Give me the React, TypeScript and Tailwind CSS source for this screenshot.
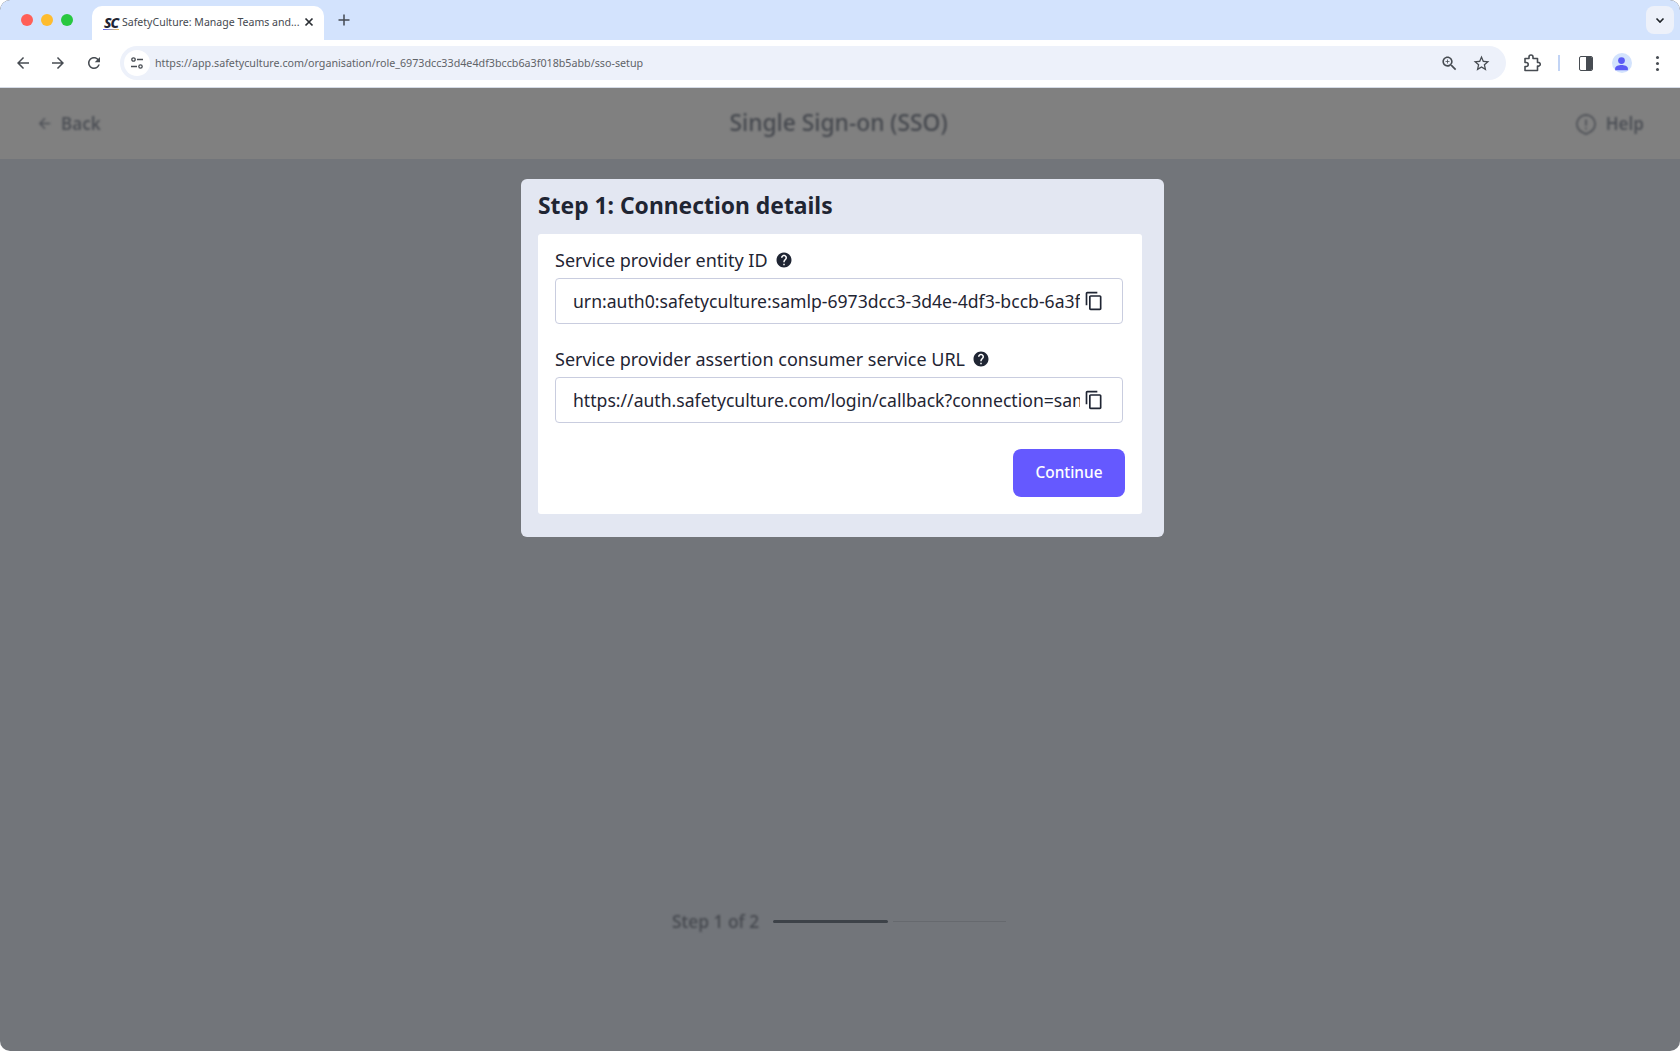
import React from 'react';

const font = "font-['Noto_Sans',sans-serif]";

const MatIcon: React.FC<{ d: string; className?: string }> = ({ d, className }) => (
    <svg viewBox="0 0 24 24" fill="currentColor" className={className}>
        <path d={d} />
    </svg>
);

const paths = {
    back: 'M20 11H7.83l5.59-5.59L12 4l-8 8 8 8 1.41-1.41L7.83 13H20v-2z',
    forward: 'M12 4l-1.41 1.41L16.17 11H4v2h12.17l-5.58 5.59L12 20l8-8z',
    refresh: 'M17.65 6.35C16.2 4.9 14.21 4 12 4c-4.42 0-7.99 3.58-7.99 8s3.57 8 7.99 8c3.73 0 6.84-2.55 7.73-6h-2.08c-.82 2.33-3.04 4-5.65 4-3.31 0-6-2.69-6-6s2.69-6 6-6c1.66 0 3.14.69 4.22 1.78L13 11h7V4l-2.35 2.35z',
    zoom: 'M15.5 14h-.79l-.28-.27C15.41 12.59 16 11.11 16 9.5 16 5.91 13.09 3 9.5 3S3 5.91 3 9.5 5.91 16 9.5 16c1.61 0 3.09-.59 4.23-1.57l.27.28v.79l5 4.99L20.49 19l-4.99-5zm-6 0C7.01 14 5 11.99 5 9.5S7.01 5 9.5 5 14 7.01 14 9.5 11.99 14 9.5 14zM12 10h-2v2H9v-2H7V9h2V7h1v2h2v1z',
    star: 'M22 9.24l-7.19-.62L12 2 9.19 8.63 2 9.24l5.46 4.73L5.82 21 12 17.27 18.18 21l-1.63-7.03L22 9.24zM12 15.4l-3.76 2.27 1-4.28-3.32-2.88 4.38-.38L12 6.1l1.71 4.04 4.38.38-3.32 2.88 1 4.28L12 15.4z',
    copy: 'M16 1H4c-1.1 0-2 .9-2 2v14h2V3h12V1zm3 4H8c-1.1 0-2 .9-2 2v14c0 1.1.9 2 2 2h11c1.1 0 2-.9 2-2V7c0-1.1-.9-2-2-2zm0 16H8V7h11v14z',
    help: 'M12 2C6.48 2 2 6.48 2 12s4.48 10 10 10 10-4.48 10-10S17.52 2 12 2zm1 17h-2v-2h2v2zm2.07-7.75l-.9.92C13.45 12.9 13 13.5 13 15h-2v-.5c0-1.1.45-2.1 1.17-2.83l1.24-1.26c.37-.36.59-.86.59-1.41 0-1.1-.9-2-2-2s-2 .9-2 2H8c0-2.21 1.79-4 4-4s4 1.79 4 4c0 .88-.36 1.68-.93 2.25z',
};

const TabBar = () => (
    <div className="flex h-10 items-end bg-[#d3e3fd] rounded-t-[10px]">
        <div className="flex h-10 w-[92px] items-center gap-[8px] pl-[21px] pb-[1px]">
            <span className="h-3 w-3 rounded-full bg-[#ff5f57]" />
            <span className="h-3 w-3 rounded-full bg-[#febc2e]" />
            <span className="h-3 w-3 rounded-full bg-[#28c840]" />
        </div>
        <div className="flex h-[34px] w-[232px] items-center rounded-t-[10px] bg-white pl-[9px] pr-[10px]">
            <div className="flex w-[20px] flex-col items-center">
                <span className="text-[14px] font-extrabold italic leading-[12px] tracking-[-1px] text-[#1f2533]">SC</span>
                <span className="h-[1px] w-[16px] bg-gradient-to-r from-[#5b5bf5] to-[#f5c242]" />
            </div>
            <span className="ml-[1px] whitespace-nowrap text-[10.55px] text-[#45494f]">SafetyCulture: Manage Teams and...</span>
            <svg viewBox="0 0 10 10" className="ml-auto mb-[3px] h-[10px] w-[10px] text-[#2a2e33]" stroke="currentColor" strokeWidth="1.7" fill="none">
                <path d="M1.5 1.5l7 7M8.5 1.5l-7 7" />
            </svg>
        </div>
        <div className="flex h-10 w-[40px] items-center justify-center pb-[1px]">
            <svg viewBox="0 0 12 12" className="h-3 w-3 text-[#444a52]" stroke="currentColor" strokeWidth="1.5" fill="none">
                <path d="M6 0.5v11M0.5 6h11" />
            </svg>
        </div>
        <div className="ml-auto flex h-10 items-center pr-[6px]">
            <div className="flex h-7 w-7 items-center justify-center rounded-[8px] bg-[#edf1fa]">
                <svg viewBox="0 0 12 12" className="h-3 w-3 text-[#1f2328]" stroke="currentColor" strokeWidth="1.6" fill="none">
                    <path d="M2.5 4.5L6 8l3.5-3.5" />
                </svg>
            </div>
        </div>
    </div>
);

const Toolbar = () => (
    <div className="flex h-[48px] items-center border-b border-[#d5dbe6] bg-white pb-[1px]">
        <div className="flex w-[120px] items-center pl-[14px] text-[#474c52]">
            <MatIcon d={paths.back} className="h-[18px] w-[18px]" />
            <MatIcon d={paths.forward} className="ml-[17px] h-[18px] w-[18px]" />
            <MatIcon d={paths.refresh} className="ml-[18px] h-[18px] w-[18px]" />
        </div>
        <div className="flex h-[34px] w-[1386px] items-center rounded-full bg-[#edf1fa] pl-[4px] pr-[15px]">
            <div className="flex h-[26px] w-[26px] items-center justify-center rounded-full bg-white">
                <svg viewBox="0 0 14 14" className="h-[14px] w-[14px] text-[#474c52]" stroke="currentColor" strokeWidth="1.3" fill="none">
                    <circle cx="3.5" cy="3.500" r="1.7" />
                    <path d="M7 3.5h6M1 10.5h6" />
                    <circle cx="10.5" cy="10.5" r="1.7" />
                </svg>
            </div>
            <span className="ml-[5px] whitespace-nowrap text-[10.72px] text-[#5f6368]">https://app.safetyculture.com/organisation/role_6973dcc33d4e4df3bccb6a3f018b5abb/sso-setup</span>
            <MatIcon d={paths.zoom} className="ml-auto h-[19px] w-[19px] text-[#474c52]" />
            <MatIcon d={paths.star} className="ml-[13px] h-[19px] w-[19px] text-[#474c52]" />
        </div>
        <svg viewBox="0 0 20 20" className="ml-[16px] h-[20px] w-[20px] text-[#474c52]" stroke="currentColor" strokeWidth="1.6" fill="none">
            <path d="M3 5.5h4V4a2 2 0 0 1 4 0v1.5h4.5v4H17a1.9 1.9 0 0 1 0 3.6h-1.5v4.4H3v-4h1.2a2 2 0 0 0 0-4H3z" strokeLinejoin="round" />
        </svg>
        <span className="ml-[16px] h-[16px] w-[1.5px] bg-[#c2d4f5]" />
        <div className="ml-[19px] flex h-[15px] w-[14px] overflow-hidden rounded-[2px] border-[1.5px] border-[#474c52]">
            <span className="w-1/2" />
            <span className="w-1/2 bg-[#474c52]" />
        </div>
        <div className="ml-[19px] flex h-5 w-5 items-center justify-center rounded-full bg-[#d3e3fd]">
            <svg viewBox="0 0 20 20" className="h-[15px] w-[15px] text-[#5b5bf5]" fill="currentColor">
                <circle cx="10" cy="6" r="4.5" />
                <path d="M1.5 19v-2.5c0-3 5-4.5 8.5-4.5s8.5 1.500 8.500 4.500V19z" />
            </svg>
        </div>
        <div className="ml-[24px] flex flex-col gap-[3px]">
            <span className="h-[3px] w-[3px] rounded-full bg-[#474c52]" />
            <span className="h-[3px] w-[3px] rounded-full bg-[#474c52]" />
            <span className="h-[3px] w-[3px] rounded-full bg-[#474c52]" />
        </div>
    </div>
);

const PageHeader = () => (
    <div className="flex h-[71px] items-center justify-between bg-[#808080] pl-[36px] pr-[36px] text-[#4d5056]">
        <div className="flex w-[200px] items-center gap-[8px] blur-[1px]">
            <MatIcon d={paths.back} className="h-[17px] w-[17px]" />
            <span className="text-[17px] font-semibold">Back</span>
        </div>
        <h1 className="mr-[3px] text-[22.8px] font-medium blur-[1px] text-[#45484e]">Single Sign-on (SSO)</h1>
        <div className="flex w-[200px] items-center justify-end gap-[9px] blur-[1px]">
            <svg viewBox="0 0 24 24" className="h-[22px] w-[22px]" stroke="currentColor" strokeWidth="1.800" fill="none">
                <path d="M12 2a10 10 0 0 1 3 19.500L12 23l-3-1.500A10 10 0 0 1 12 2zM12 7v7M12 16v2" />
            </svg>
            <span className="text-[17px] font-semibold">Help</span>
        </div>
    </div>
);

const CopyField: React.FC<{ label: string; value: string; className?: string }> = ({ label, value, className }) => (
    <div className={className}>
        <div className="flex h-[24px] items-center gap-[7px] text-[18px] leading-6 text-[#1f2533]">
            <span>{label}</span>
            <MatIcon d={paths.help} className="h-[18px] w-[18px]" />
        </div>
        <div className="mt-[6px] flex h-[46px] w-[568px] items-center rounded-[4px] border border-[#c9cddf] bg-white pl-[17px] pr-[18px]">
            <div className="min-w-0 flex-1 overflow-hidden whitespace-nowrap text-[17.6px] text-[#1f2533]">{value}</div>
            <MatIcon d={paths.copy} className="ml-[4px] h-[20px] w-[20px] shrink-0 text-[#1f2533]" />
        </div>
    </div>
);

const StepCard = () => (
    <div className="ml-[521px] mt-[20px] h-[358px] w-[643px] rounded-[6px] bg-[#e3e7f2] pl-[17px] pr-[22px]">
        <h2 className="flex h-[55px] items-center text-[22.85px] font-bold text-[#1f2533]">Step 1: Connection details</h2>
        <div className="h-[280px] rounded-[3px] bg-white pl-[17px] pr-[17px] pt-[14px]">
            <CopyField label="Service provider entity ID" value="urn:auth0:safetyculture:samlp-6973dcc3-3d4e-4df3-bccb-6a3f" />
            <CopyField className="mt-[23px]" label="Service provider assertion consumer service URL" value="https://auth.safetyculture.com/login/callback?connection=sam" />
            <div className="mt-[26px] flex justify-end">
                <button className={`h-[48px] w-[112px] rounded-[8px] bg-[#6559ff] text-[15.4px] font-medium text-white ${font}`}>Continue</button>
            </div>
        </div>
    </div>
);

const Progress = () => (
    <div className="ml-[672px] mt-auto mb-[117px] flex items-center text-[#45484e]">
        <span className="w-[101px] text-[17.4px] font-medium blur-[1px]">Step 1 of 2</span>
        <div className="mt-[2px] flex h-[3px] w-[233px] blur-[0.5px]">
            <span className="h-[3px] w-[115px] rounded-full bg-[#3d4248]" />
            <span className="ml-[5px] mt-[1px] h-[1px] flex-1 bg-[#66696e]" />
        </div>
    </div>
);

export default function App() {
    return (
        <div className={`h-[1051px] w-[1680px] overflow-hidden bg-white ${font}`}>
            <div className="flex h-full flex-col overflow-hidden rounded-[10px] bg-[#72757a]">
                <TabBar />
                <Toolbar />
                <PageHeader />
                <StepCard />
                <Progress />
            </div>
        </div>
    );
}
